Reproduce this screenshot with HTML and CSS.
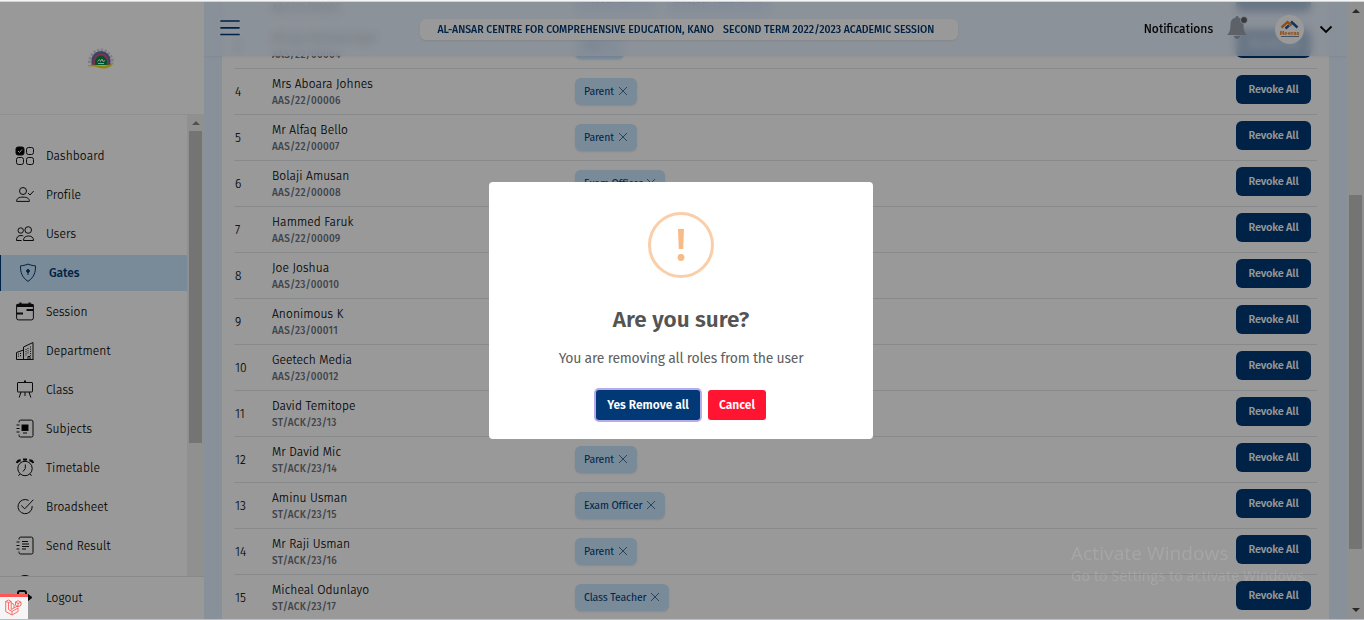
FILE: index.html
```html
<!DOCTYPE html>
<html lang="en">
<head>
<meta charset="utf-8">
<title>Gates</title>
<link rel="stylesheet" href="styles.css">
</head>
<body>
<div class="app">
  <aside class="sidebar">
    <div class="brand">
      <svg width="28" height="24" viewBox="0 0 28 24">
        <path d="M2.500 17A11.500 13 0 0 1 25.500 17" fill="none" stroke="#d2d2e0" stroke-width="3" stroke-dasharray="2.300 1.500"/>
        <path d="M4.500 19V14.500a9.500 9.500 0 0 1 19 0V19z" fill="#6a6ab8"/>
        <path d="M6.500 19v-4a7.500 7.500 0 0 1 15 0v4z" fill="#d85868"/>
        <path d="M8 19v-3a6 6.500 0 0 1 12 0v3z" fill="#008a4c"/>
        <path d="M10.500 15.500l2-2 1 2 1.500-2.500 1 2.500 2-1M11 17.500h6" fill="none" stroke="#fff" stroke-width="1"/>
        <path d="M1 19.500c6-2 10 1 16 .5 4-.3 7-2 9.500-4-1 4-4.500 6-8.500 6.500-6 .5-10-3-17-2z" fill="#eadf10"/>
      </svg>
    </div>
    <div class="menu">
      <nav class="links">
        <a class="link"><svg class="icon" viewBox="0 0 18 18"><rect x="0" y="0" width="8" height="8" rx="2" fill="#000"/><path d="M2 4l1.500 1.500L6 2.500" stroke="#fff"/><rect x="10.500" y=".5" width="7" height="7" rx="2"/><rect x=".5" y="10.500" width="7" height="7" rx="2"/><rect x="10.500" y="10.500" width="7" height="7" rx="2"/></svg>Dashboard</a>
        <a class="link"><svg class="icon" viewBox="0 0 18 18"><circle cx="7" cy="5" r="3.500"/><path d="M.6 15.400c0-3 2.200-4.300 6.400-4.300s6.400 1.300 6.400 4.300zM12 7l2 2L17.700 5"/></svg>Profile</a>
        <a class="link"><svg class="icon" viewBox="0 0 18 18"><circle cx="4.700" cy="5.500" r="2.700"/><circle cx="12.200" cy="5" r="3.300"/><path d="M7.500 15.500c0-3 1.800-4.500 5-4.500s5 1.500 5 4.500zM5.600 15.500H.5c0-3.500 1.500-5 4.500-5 1 0 1.800.2 2.300.5"/></svg>Users</a>
        <a class="link active"><svg class="icon" viewBox="0 0 18 18"><path d="M9 .1c3 1.200 5 1.500 7.400 1.700.5 6-1.500 11.700-7.400 15.600C3.100 13.500 1.100 7.800 1.600 1.800 4 1.600 6 1.300 9 .1z"/><circle cx="9" cy="7" r="1.400" fill="#003975"/><path d="M9 7.500v3.500"/></svg>Gates</a>
        <a class="link"><svg class="icon" viewBox="0 0 18 18"><rect x=".6" y="1.100" width="16.800" height="15.800" rx="2"/><path d="M.5 2.500h17" stroke-width="3"/><path d="M4.500-.5v2M13.500-.5v2M10.500 7h7M.5 10.500H7" stroke-width="2"/></svg>Session</a>
        <a class="link"><svg class="icon" viewBox="0 0 18 18"><path d="M.5 17.500v-7l7-2.500M7.500 17.500V5l9.500-4.500v17zM.5 17.500h17M12 17.500v-3h2v3"/><path d="M2.500 11.500v4M4.500 11v4.500M10 7v7M12 6v6M14.500 4.500V14" stroke-dasharray="1 1.200"/></svg>Department</a>
        <a class="link"><svg class="icon" viewBox="0 0 18 18"><rect x="1.500" y="1.500" width="15" height="9.500" rx=".5"/><path d="M5 11l-1.800 5.500M13 11l1.800 5.500M9 11v4"/><path d="M9-.5v2" stroke-width="2"/></svg>Class</a>
        <a class="link"><svg class="icon" viewBox="0 0 18 18"><path d="M3 2.500V2Q3 .1 4.500.1H15.500Q17 .1 17 2V15.500Q17 17 15.500 17H4.500Q3 17 3 15.500V14.500M.5 5h3M.5 8.500h3M.5 12h3"/><rect x="6" y="5" width="6" height="5.500" fill="#000"/><path d="M7 13h4"/></svg>Subjects</a>
        <a class="link"><svg class="icon" viewBox="0 0 18 18"><circle cx="9" cy="9.500" r="7.200"/><path d="M9.300 5.500v4L7 12.500M9 .3v2M3.800 15l-1.300 1.800M14.200 15l1.300 1.800"/><path d="M7 .5h4M.8 4C1.500 2 3 1.200 4.700 1.300M17.200 4C16.500 2 15 1.200 13.300 1.300" stroke-width="2.200"/></svg>Timetable</a>
        <a class="link"><svg class="icon" viewBox="0 0 18 18"><path d="M12.600 2.400A7.100 7.100 0 1 0 16.200 8M5.300 7.500l3.400 3.300L17.300 1.800"/></svg>Broadsheet</a>
        <a class="link"><svg class="icon" viewBox="0 0 18 18"><path d="M3 2.500V2Q3 .1 4.500.1H15.500Q17 .1 17 2V15.500Q17 17 15.500 17H4.500Q3 17 3 15.500V14.500M.5 5h3M.5 8.500h3M.5 12h3M6 4.500h6M6 7h7M6 9.500h7M6 12h4"/></svg>Send Result</a>
        <a class="link"><svg class="icon" viewBox="0 0 18 18"><circle cx="9" cy="8" r="8" stroke-width="2"/></svg></a>
      </nav>
      <div class="track side"><i class="up"></i><i class="thumb"></i></div>
    </div>
    <a class="link logout"><svg class="icon" viewBox="0 0 18 18"><path d="M2 7V4q0-2 2-2h4q2 0 2 2v2M2 10v4q0 2 2 2h4q2 0 2-2v-2M6 8.500h7" stroke-width="2"/><path d="M12 5.500l4 3-4 3z" fill="#000"/></svg>Logout</a>
  </aside>

  <main class="content">
    <header class="topbar">
      <svg class="burger" width="20" height="16" viewBox="0 0 20 16"><path d="M1 1h18M1 7.800h18M1 14.500h18" stroke="#003975" stroke-width="1.700" stroke-linecap="round"/></svg>
      <div class="school"><span class="school-name">AL-ANSAR CENTRE FOR COMPREHENSIVE EDUCATION, KANO</span><span class="school-term">SECOND TERM 2022/2023 ACADEMIC SESSION</span></div>
      <div class="account">
        <span class="notify">Notifications</span>
        <svg class="bell" width="21" height="24" viewBox="0 0 21 24"><path d="M10 0c-1 0-1.500.6-1.500 1.500C5 2.300 3.500 5 3.500 8c0 6-1 8.500-3.300 11h19.600C17.500 16.500 16.500 14 16.500 8c0-3-1.500-5.700-5-6.500C11.500.6 11 0 10 0zM7 20h6c0 1.500-1.300 2.700-3 2.700S7 21.500 7 20z" fill="#9ca3af"/><circle cx="17" cy="4" r="3.500" fill="#5b6068" stroke="#e8f0fa" stroke-width=".8"/></svg>
        <div class="avatar">
          <svg viewBox="0 0 19 10"><path d="M1.500 7.500L7.500 2l4 3.500" stroke="#f58220" stroke-width="2.400" fill="none"/><path d="M5.500 8.500L9 5.500M11 1.500l6.500 6" stroke="#1459a0" stroke-width="2.400"/></svg>
          <b>Meeras</b><u></u>
        </div>
        <svg class="caret" width="14" height="9" viewBox="0 0 14 9"><path d="M1.500 1.500L7 7l5.500-5.500" fill="none" stroke="#000" stroke-width="1.800"/></svg>
      </div>
    </header>
    <section class="card">
      <div class="row"><span class="num"></span><div class="who"><p class="name">&nbsp;</p><p class="code">AAS/22/00003</p></div><div class="roles"><span class="role">Accountan<svg class="x" viewBox="0 0 10 10"><path d="M1 1l8 8M9 1L1 9"/></svg></span><span class="role">Subject Teacher<svg class="x" viewBox="0 0 10 10"><path d="M1 1l8 8M9 1L1 9"/></svg></span></div><button class="revoke">Revoke All</button></div>
      <div class="row"><span class="num">3</span><div class="who"><p class="name">Alhaja Omowaregor</p><p class="code">AAS/22/00004</p></div><div class="roles"><span class="role">Sep<svg class="x" viewBox="0 0 10 10"><path d="M1 1l8 8M9 1L1 9"/></svg></span></div><button class="revoke">Revoke All</button></div>
      <div class="row"><span class="num">4</span><div class="who"><p class="name">Mrs Aboara Johnes</p><p class="code">AAS/22/00006</p></div><div class="roles"><span class="role">Parent<svg class="x" viewBox="0 0 10 10"><path d="M1 1l8 8M9 1L1 9"/></svg></span></div><button class="revoke">Revoke All</button></div>
      <div class="row"><span class="num">5</span><div class="who"><p class="name">Mr Alfaq Bello</p><p class="code">AAS/22/00007</p></div><div class="roles"><span class="role">Parent<svg class="x" viewBox="0 0 10 10"><path d="M1 1l8 8M9 1L1 9"/></svg></span></div><button class="revoke">Revoke All</button></div>
      <div class="row"><span class="num">6</span><div class="who"><p class="name">Bolaji Amusan</p><p class="code">AAS/22/00008</p></div><div class="roles"><span class="role">Exam Officer<svg class="x" viewBox="0 0 10 10"><path d="M1 1l8 8M9 1L1 9"/></svg></span></div><button class="revoke">Revoke All</button></div>
      <div class="row"><span class="num">7</span><div class="who"><p class="name">Hammed Faruk</p><p class="code">AAS/22/00009</p></div><div class="roles"></div><button class="revoke">Revoke All</button></div>
      <div class="row"><span class="num">8</span><div class="who"><p class="name">Joe Joshua</p><p class="code">AAS/23/00010</p></div><div class="roles"></div><button class="revoke">Revoke All</button></div>
      <div class="row"><span class="num">9</span><div class="who"><p class="name">Anonimous K</p><p class="code">AAS/23/00011</p></div><div class="roles"></div><button class="revoke">Revoke All</button></div>
      <div class="row"><span class="num">10</span><div class="who"><p class="name">Geetech Media</p><p class="code">AAS/23/00012</p></div><div class="roles"></div><button class="revoke">Revoke All</button></div>
      <div class="row"><span class="num">11</span><div class="who"><p class="name">David Temitope</p><p class="code">ST/ACK/23/13</p></div><div class="roles"></div><button class="revoke">Revoke All</button></div>
      <div class="row"><span class="num">12</span><div class="who"><p class="name">Mr David Mic</p><p class="code">ST/ACK/23/14</p></div><div class="roles"><span class="role">Parent<svg class="x" viewBox="0 0 10 10"><path d="M1 1l8 8M9 1L1 9"/></svg></span></div><button class="revoke">Revoke All</button></div>
      <div class="row"><span class="num">13</span><div class="who"><p class="name">Aminu Usman</p><p class="code">ST/ACK/23/15</p></div><div class="roles"><span class="role">Exam Officer<svg class="x" viewBox="0 0 10 10"><path d="M1 1l8 8M9 1L1 9"/></svg></span></div><button class="revoke">Revoke All</button></div>
      <div class="row"><span class="num">14</span><div class="who"><p class="name">Mr Raji Usman</p><p class="code">ST/ACK/23/16</p></div><div class="roles"><span class="role">Parent<svg class="x" viewBox="0 0 10 10"><path d="M1 1l8 8M9 1L1 9"/></svg></span></div><button class="revoke">Revoke All</button></div>
      <div class="row"><span class="num">15</span><div class="who"><p class="name">Micheal Odunlayo</p><p class="code">ST/ACK/23/17</p></div><div class="roles"><span class="role">Class Teacher<svg class="x" viewBox="0 0 10 10"><path d="M1 1l8 8M9 1L1 9"/></svg></span></div><button class="revoke">Revoke All</button></div>
    </section>
  </main>
  <div class="track page"><i class="up"></i><i class="thumb"></i><i class="down"></i></div>

  <div class="overlay">
    <div class="dialog">
      <div class="warn"><svg width="10" height="32" viewBox="0 0 10 32"><path d="M2 0h6l-.8 20H2.800z" fill="#f8bb86"/><circle cx="5" cy="28.500" r="3.400" fill="#f8bb86"/></svg></div>
      <h2 class="title">Are you sure?</h2>
      <p class="text">You are removing all roles from the user</p>
      <div class="actions"><button class="yes">Yes Remove all</button><button class="cancel">Cancel</button></div>
    </div>
  </div>
  <div class="debug"><svg width="17" height="17" viewBox="0 0 17 17"><path d="M.7 2.500L3.500 1l2.700 1.500v8L9 9V5.500L6.500 4M.7 2.500v10L7 16l6-3.500V9L7 12.500l-3.500-2v-7zM3.500 3.500l2.700-1M9 9l4-2.200M10.500 3L13 1.700 16 3.200v3L13 7.800l-2.500-1.500zM10.500 3L13 4.500l3-1.300M13 4.500v3.300M7 12.500V16" fill="none" stroke="#ff4b47" stroke-width=".8"/></svg></div>
  <div class="watermark"><p class="wm-title">Activate Windows</p><p class="wm-sub">Go to Settings to activate Windows.</p></div>
</div>
</body>
</html>
```
FILE: styles.css
```css
* { box-sizing: border-box; }
body { margin: 0; height: 620px; overflow: hidden; padding: 2px 0 1px; background: linear-gradient(#f4f4f4 1px, #d0d4d6 1px, #d0d4d6 2px, #bcbdc3 2px); font-family: "Fira Sans", "Noto Sans", "Open Sans", sans-serif; font-size: 12px; color: #1a1a1a; }
p, h2 { margin: 0; }
button { border: 0; padding: 0; font-family: inherit; color: #fff; }
.app { position: relative; display: flex; height: 617px; overflow: hidden; }

.sidebar { width: 204px; flex: none; display: flex; flex-direction: column; background: #fff; }
.brand { height: 113px; flex: none; display: flex; align-items: center; justify-content: center; border-bottom: 1px solid #efefef; padding-right: 2px; }
.menu { flex: 1; min-height: 0; display: flex; overflow: hidden; }
.links { flex: 1; padding-top: 23px; display: flex; flex-direction: column; gap: 3px; }
.link { height: 36px; flex: none; display: flex; align-items: center; gap: 12px; padding-left: 16px; font-weight: 300; letter-spacing: .1px; color: #000; -webkit-text-stroke: .12px currentColor; }
.icon { width: 18px; height: 18px; fill: none; stroke: #111; stroke-width: 1; overflow: visible; }
.active { background: #cae6ff; border-left: 1px solid #003975; padding-left: 18px; color: #003975; font-weight: 500; letter-spacing: -.1px; -webkit-text-stroke: 0; }
.active .icon { stroke: #003975; }
.logout { height: 43px; border-top: 1px solid #e5e5e5; }

.track { width: 17px; flex: none; background: #f1f1f1; display: flex; flex-direction: column; align-items: center; padding-top: 6px; }
.track .up { border: 4px solid transparent; border-top: 0; border-bottom: 4px solid #888; }
.track .down { border: 4px solid transparent; border-bottom: 0; border-top: 4px solid #444; margin-top: 59px; }
.track .thumb { width: 13px; background: #c1c1c1; }
.side .thumb { height: 312px; margin-top: 6px; }
.page { padding-top: 7px; }
.page .up { border-bottom-color: #444; }
.page .thumb { height: 354px; margin-top: 182px; }

.content { position: relative; flex: 1; min-width: 0; overflow: hidden; background: #e3f1ff; padding: 0 18px; }
.card { background: #fff; margin-top: -25px; padding: 0 12px; }
.row { height: 46px; display: flex; align-items: flex-start; border-bottom: 1px solid #e3e5e8; padding: 6px 6px 0 1px; }
.num { width: 37px; padding-top: 8px; line-height: 18px; font-weight: 300; color: #000; -webkit-text-stroke: .12px #000; }
.who { width: 303px; }
.name { font-size: 12px; line-height: 18px; font-weight: 300; color: #000; letter-spacing: .08px; -webkit-text-stroke: .12px #000; }
.code { font-size: 10px; line-height: 16px; font-weight: 500; color: #6b7280; letter-spacing: .25px; }
.roles { flex: 1; display: flex; gap: 10px; padding-top: 3px; }
.role { height: 27px; display: flex; align-items: center; gap: 4px; padding: 0 9px; border-radius: 6px; background: #cae6ff; color: #003975; font-size: 10.5px; letter-spacing: -.12px; box-shadow: 0 1px 2px rgba(0,0,0,.1); }
.x { width: 10px; height: 10px; margin-bottom: 2px; fill: none; stroke: #4a7098; stroke-width: 1; }
.revoke { width: 75px; height: 29px; border-radius: 6px; background: #003975; font-size: 11px; font-weight: 500; letter-spacing: -.2px; padding-bottom: 1px; }

.topbar { position: absolute; z-index: 1; top: 0; left: 0; right: 0; height: 54px; display: flex; align-items: center; padding: 0 14px 0 16px; background: rgba(228,239,255,.76); backdrop-filter: blur(4px); box-shadow: 0 1px 2px rgba(0,0,0,.06); }
.burger { margin-right: 180px; margin-bottom: 2px; }
.school { width: 538px; height: 21px; display: flex; align-items: center; gap: 9px; padding-left: 17.5px; border-radius: 6px; background: #fff; color: #003975; font-size: 10.500px; font-weight: 500; white-space: nowrap; box-shadow: 0 1px 2px rgba(0,0,0,.08); }
.account { flex: 1; display: flex; align-items: center; justify-content: flex-end; }
.notify { color: #000; margin-right: 14px; -webkit-text-stroke: .2px #000; }
.bell { margin-bottom: 2px; }
.avatar { width: 29px; height: 29px; margin: 0 15px 0 27px; border-radius: 50%; background: #fff; display: flex; flex-direction: column; align-items: center; padding-top: 5px; }
.avatar svg { width: 19px; height: 10px; flex: none; }
.avatar b { font-size: 6px; line-height: 6px; color: #f58220; }
.avatar u { width: 18px; height: 1px; background: #6a8cb0; }

.overlay { position: absolute; inset: 0; z-index: 2; background: rgba(0,0,0,.4); display: flex; align-items: flex-start; justify-content: center; padding: 180px 2px 0 0; }
.dialog { width: 384px; height: 257px; border-radius: 4px; background: #fff; display: flex; flex-direction: column; align-items: center; padding-top: 30px; color: #545454; }
.warn { width: 66px; height: 66px; border: 3px solid #facea8; border-radius: 50%; display: flex; justify-content: center; padding-top: 14px; }
.title { margin-top: 27px; font-size: 22.5px; line-height: 30px; font-weight: 600; }
.text { margin-top: 13px; font-size: 14px; line-height: 22px; letter-spacing: -.23px; color: #606060; }
.actions { display: flex; gap: 8px; margin-top: 20px; }
.actions button { height: 30px; border-radius: 3px; font-size: 12px; font-weight: 600; }
.yes { width: 104px; background: #003975; box-shadow: 0 0 0 2px #b5aceb; }
.cancel { width: 58px; background: #ff1431; }

.debug { position: absolute; z-index: 3; left: 0; bottom: 0; width: 28px; height: 25px; border-top: 3px solid #ff5555; background: #f5f5f5; padding: 2px 0 0 5px; }
.watermark { position: absolute; z-index: 3; left: 1071px; top: 538px; color: rgba(255,255,255,.13); font-family: "Open Sans", sans-serif; white-space: nowrap; }
.wm-title { font-size: 19px; line-height: 26px; letter-spacing: .1px; }
.wm-sub { font-size: 14px; line-height: 19px; letter-spacing: .22px; }
```
